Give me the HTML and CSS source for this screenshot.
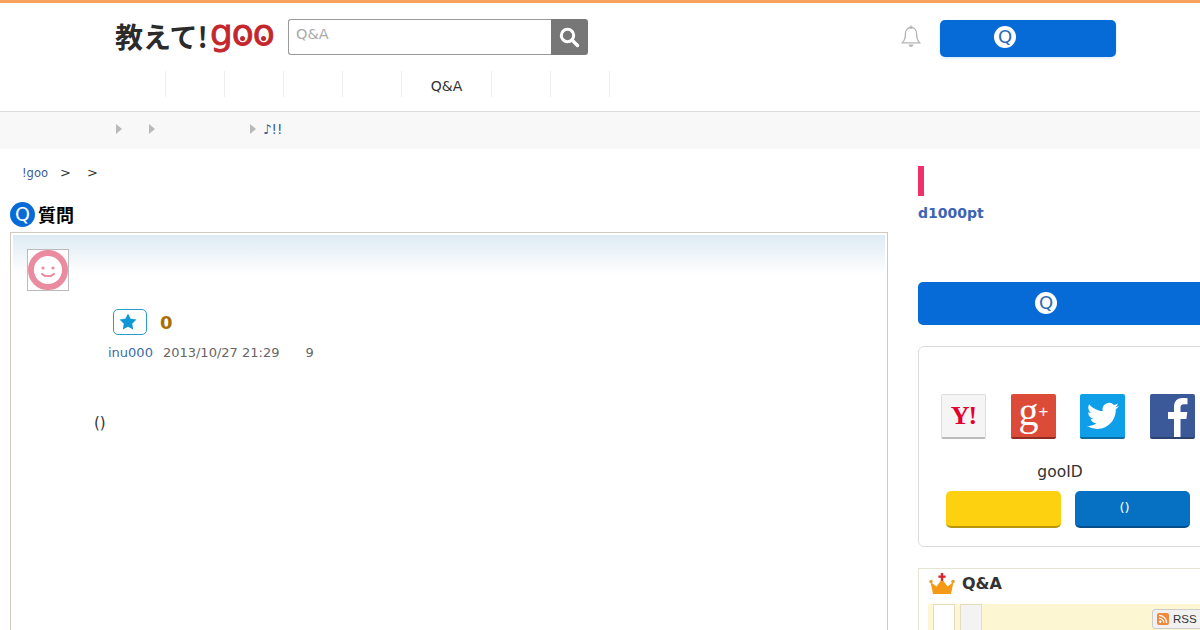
FILE: index.html
```html
<!DOCTYPE html>
<html lang="ja">
<head>
    <meta charset="UTF-8">
    <meta name="viewport" content="width=device-width, initial-scale=1.0">
    <title>教えて!goo</title>
    <link rel="stylesheet" href="styles.css">
</head>
<body>
    <header class="header">
        <div class="header-top">
            <a class="logo"><span class="logo-ja">教えて!</span><span class="logo-goo">g<span class="logo-o">o</span><span class="logo-o">o</span></span></a>
            <form class="search">
                <div class="search-input">Q&amp;A</div>
                <button class="search-btn" type="button">
                    <svg width="22" height="22" viewBox="0 0 22 22"><circle cx="9.500" cy="9.500" r="6.200" fill="none" stroke="#fff" stroke-width="3"/><path d="M14 14l5.500 5.500" stroke="#fff" stroke-width="3.400" stroke-linecap="round"/></svg>
                </button>
            </form>
            <svg class="bell" width="20" height="24" viewBox="0 0 20 24"><path d="M10 2.500c-3.600 0-5.600 2.800-5.600 6.300 0 4.600-.8 6.900-3 9h17.200c-2.200-2.100-3-4.400-3-9 0-3.500-2-6.300-5.600-6.300z" fill="none" stroke="#b5b5b5" stroke-width="1.300"/><circle cx="10" cy="2.200" r="1.200" fill="none" stroke="#b5b5b5"/><path d="M7.500 19.500c.4 1.700 1.400 2.500 2.500 2.500s2.100-.8 2.500-2.500z" fill="#b5b5b5"/></svg>
            <a class="ask-btn ask-btn-head"><span class="q-mark">Q</span></a>
        </div>
        <nav class="nav">
            <a class="nav-item"></a>
            <a class="nav-item"></a>
            <a class="nav-item"></a>
            <a class="nav-item"></a>
            <a class="nav-item"></a>
            <a class="nav-item nav-wide">Q&amp;A</a>
            <a class="nav-item"></a>
            <a class="nav-item"></a>
        </nav>
    </header>

    <div class="notice">
        <span class="arrow arrow-1"></span>
        <span class="arrow arrow-2"></span>
        <span class="arrow arrow-3"></span>
        <a class="notice-link">♪!!</a>
    </div>

    <div class="page">
        <main class="main">
            <div class="crumbs"><a>!goo</a><span>&gt;</span><span>&gt;</span></div>
            <h2 class="q-title"><span class="q-badge">Q</span>質問</h2>
            <section class="q-box">
                <div class="q-inner">
                    <div class="avatar">
                        <svg width="40" height="40" viewBox="0 0 40 40"><circle cx="20" cy="20" r="17" fill="#fff" stroke="#ea8ba0" stroke-width="6"/><circle cx="15" cy="18" r="1.600" fill="#ea8ba0"/><circle cx="25" cy="18" r="1.600" fill="#ea8ba0"/><path d="M14 24c3 3 9 3 12 0" fill="none" stroke="#ea8ba0" stroke-width="2" stroke-linecap="round"/></svg>
                    </div>
                    <div class="fav-row">
                        <button class="fav-btn" type="button">
                            <svg width="18" height="17" viewBox="0 0 18 17"><path d="M9 .5l2.600 5.300 5.900.8-4.300 4.100 1 5.800L9 13.800l-5.200 2.700 1-5.800L.5 6.600l5.900-.8z" fill="#0f97d6"/></svg>
                        </button>
                        <span class="fav-count">0</span>
                    </div>
                    <p class="meta"><a>inu000</a><span class="meta-date">2013/10/27 21:29</span><span class="meta-num">9</span></p>
                    <p class="q-body">()</p>
                </div>
            </section>
        </main>

        <aside class="side">
            <div class="pink-bar"></div>
            <a class="point">d1000pt</a>
            <a class="ask-btn ask-btn-side"><span class="q-mark">Q</span></a>

            <section class="login-box">
                <div class="sns">
                    <a class="sns-icon sns-y">Y!</a>
                    <a class="sns-icon sns-g">g<small>+</small></a>
                    <a class="sns-icon sns-t">
                        <svg width="32" height="32" viewBox="0 0 24 24"><path fill="#fff" d="M23.953 4.570a10 10 0 01-2.825.775 4.958 4.958 0 002.163-2.723c-.951.555-2.005.959-3.127 1.184a4.920 4.920 0 00-8.384 4.482C7.690 8.095 4.067 6.130 1.640 3.162a4.822 4.822 0 00-.666 2.475c0 1.710.870 3.213 2.188 4.096a4.904 4.904 0 01-2.228-.616v.060a4.923 4.923 0 003.946 4.827 4.996 4.996 0 01-2.212.085 4.936 4.936 0 004.604 3.417 9.867 9.867 0 01-6.102 2.105c-.390 0-.779-.023-1.170-.067a13.995 13.995 0 007.557 2.209c9.053 0 13.998-7.496 13.998-13.985 0-.210 0-.420-.015-.630A9.935 9.935 0 0024 4.590z"/></svg>
                    </a>
                    <a class="sns-icon sns-f">
                        <svg width="45" height="43" viewBox="0 0 45 43"><path fill="#fff" d="M24 43V25h-6v-7h6v-5c0-6 3.500-9 8.500-9 2.400 0 4.500.2 5 .3v6h-3.500c-2.800 0-3.500 1.300-3.500 3.300V18h6.800l-.9 7h-5.900v18z"/></svg>
                    </a>
                </div>
                <p class="login-text">gooID</p>
                <div class="login-btns">
                    <a class="login-btn login-yellow"></a>
                    <a class="login-btn login-blue">()</a>
                </div>
            </section>

            <section class="rank-box">
                <h3 class="rank-title">
                    <svg width="26" height="22" viewBox="0 0 26 22"><path d="M4 21L1.500 9l6 4.500L13 6l5.500 7.500 6-4.500L22 21z" fill="#f59a16"/><circle cx="2" cy="8.500" r="1.800" fill="#e2a13a"/><circle cx="24" cy="8.500" r="1.800" fill="#e2a13a"/><path d="M11.800 0h2.400v2.400h2.400v2.400h-2.400v3h-2.400v-3H9.400V2.400h2.400z" fill="#d8232a"/></svg>
                    Q&amp;A
                </h3>
                <div class="rank-band">
                    <span class="rank-tab"></span>
                    <span class="rank-tab rank-tab-off"></span>
                    <a class="rss">
                        <svg width="12" height="12" viewBox="0 0 12 12"><rect width="12" height="12" rx="2" fill="#ef8a3c"/><circle cx="3.200" cy="8.800" r="1.200" fill="#fff"/><path d="M2 5.200a4.800 4.800 0 014.800 4.800M2 2.400A7.600 7.600 0 019.600 10" fill="none" stroke="#fff" stroke-width="1.300"/></svg>
                        RSS
                    </a>
                </div>
            </section>
        </aside>
    </div>
</body>
</html>
```

FILE: styles.css
```css
html, body {
    height: 630px;
    overflow: hidden;
}

body {
    font-family: "DejaVu Sans", "Noto Sans CJK JP", sans-serif;
    margin: 0;
    padding: 0;
    background-color: #fff;
    color: #333;
}

p, h2, h3 {
    margin: 0;
}

/* header */
.header {
    height: 108px;
    border-top: 3px solid #f9a15e;
    border-bottom: 1px solid #ddd;
}

.header-top {
    display: flex;
    align-items: flex-start;
    height: 68px;
    padding-left: 115px;
}

.logo {
    display: flex;
    align-items: center;
    width: 173px;
    height: 34px;
    margin-top: 16px;
    white-space: nowrap;
}

.logo-ja {
    font-family: "Noto Sans CJK JP", sans-serif;
    font-size: 28px;
    font-weight: 700;
    color: #2b2b2b;
}

.logo-goo {
    font-family: "DejaVu Sans", sans-serif;
    font-size: 36px;
    letter-spacing: -1px;
    color: #c4262c;
    -webkit-text-stroke: 0.8px #c4262c;
    margin: -8px 0 0 2px;
}

.logo-o {
    position: relative;
}

.logo-o::after {
    content: "";
    position: absolute;
    left: 8px;
    top: 24px;
    width: 5px;
    height: 5px;
    border-radius: 50%;
    background-color: #c4262c;
}

.search {
    display: flex;
    width: 300px;
    height: 36px;
    margin-top: 16px;
}

.search-input {
    flex: 1;
    border: 1px solid #999;
    border-right: none;
    border-radius: 3px 0 0 3px;
    padding: 6px 7px;
    font-size: 14.500px;
    color: #aaa;
}

.search-btn {
    width: 37px;
    padding: 0 2px 0 0;
    border: none;
    border-radius: 0 3px 3px 0;
    background-color: #777;
    display: flex;
    align-items: center;
    justify-content: center;
}

.bell {
    margin: 22px 0 0 313px;
}

.ask-btn {
    display: flex;
    justify-content: center;
    background-color: #066bd6;
    border-radius: 5px;
}

.ask-btn-head {
    width: 176px;
    height: 37px;
    margin: 17px 0 0 19px;
    padding-top: 6px;
    padding-right: 46px;
    box-sizing: border-box;
    box-shadow: 0 1px 3px #cfe6fa;
}

.q-mark {
    display: block;
    width: 22px;
    height: 22px;
    border-radius: 50%;
    background-color: #fff;
    color: #2b6cb5;
    font-size: 18px;
    line-height: 21px;
    text-align: center;
}

.nav {
    display: flex;
    height: 26px;
    padding-left: 107px;
}

.nav-item {
    box-sizing: border-box;
    width: 59px;
    border-right: 1px solid #eee;
    font-size: 14px;
    line-height: 30px;
    text-align: center;
    color: #333;
}

.nav-wide {
    width: 90px;
}

/* notice bar */
.notice {
    display: flex;
    align-items: center;
    box-sizing: border-box;
    height: 37px;
    background-color: #f8f8f8;
    padding: 0 0 3px 116px;
    font-size: 13.500px;
}

.arrow {
    width: 0;
    height: 0;
    border-left: 6px solid #b9b9b9;
    border-top: 5px solid transparent;
    border-bottom: 5px solid transparent;
}

.arrow-2 {
    margin-left: 27px;
}

.arrow-3 {
    margin-left: 95px;
}

.notice-link {
    margin-left: 7px;
    color: #3a5d94;
}

/* main layout */
.page {
    display: grid;
    grid-template-columns: 878px 300px;
    column-gap: 30px;
    padding-left: 10px;
}

.crumbs {
    display: flex;
    gap: 12px;
    height: 54px;
    padding: 16px 0 0 12px;
    box-sizing: border-box;
    font-size: 11.500px;
    line-height: 16px;
}

.crumbs a {
    color: #3a5d94;
}

.crumbs span {
    font-size: 13px;
    color: #333;
    margin-right: 4px;
}

.q-title {
    display: flex;
    align-items: flex-start;
    gap: 3px;
    height: 29px;
    margin-top: -1px;
    padding-bottom: 1px;
    font-family: "Noto Sans CJK JP", sans-serif;
    font-size: 18px;
    line-height: 25px;
    color: #000;
}

.q-badge {
    width: 25px;
    height: 25px;
    border-radius: 50%;
    background-color: #066bd6;
    color: #fff;
    font-family: "DejaVu Sans", sans-serif;
    font-size: 19px;
    font-weight: 400;
    line-height: 24px;
    text-align: center;
}

.q-box {
    width: 878px;
    height: 420px;
    box-sizing: border-box;
    border: 1px solid #cfcac0;
    padding: 2px;
}

.q-inner {
    box-sizing: border-box;
    height: 40px;
    background: linear-gradient(#deebf3, #fff);
    padding: 14px 0 0 14px;
}

.avatar {
    box-sizing: border-box;
    width: 42px;
    height: 42px;
    border: 1px solid #bbb;
    background-color: #fff;
}

.avatar svg {
    display: block;
}

.fav-row {
    display: flex;
    align-items: center;
    gap: 13px;
    margin: 18px 0 0 86px;
}

.fav-btn {
    display: flex;
    align-items: center;
    justify-content: center;
    width: 34px;
    height: 26px;
    padding: 0 4px 2px 0;
    background-color: #fff;
    border: 1px solid #2b9cc4;
    border-radius: 5px;
}

.fav-count {
    font-size: 18px;
    font-weight: 700;
    color: #a66f00;
}

.meta {
    margin: 9px 0 0 81px;
    font-size: 13px;
    line-height: 17px;
    color: #666;
    white-space: nowrap;
}

.meta a {
    color: #3a6ca8;
}

.meta-date {
    margin-left: 10px;
}

.meta-num {
    margin-left: 26px;
}

.q-body {
    margin: 52px 0 0 67px;
    font-size: 15px;
    line-height: 20px;
}

/* sidebar */
.side {
    padding-top: 17px;
}

.pink-bar {
    width: 6px;
    height: 30px;
    background-color: #f0306a;
}

.point {
    display: block;
    margin-top: 8px;
    font-size: 14px;
    font-weight: 700;
    line-height: 18px;
    color: #3c63b5;
}

.ask-btn-side {
    height: 43px;
    margin-top: 60px;
    padding: 10px 0 0 117px;
    box-sizing: border-box;
    justify-content: flex-start;
}

.login-box {
    box-sizing: border-box;
    height: 201px;
    margin-top: 21px;
    border: 1px solid #ddd;
    border-radius: 6px;
    padding: 47px 0 0 22px;
}

.sns {
    display: flex;
    gap: 24px;
}

.sns-icon {
    display: flex;
    align-items: center;
    justify-content: center;
    box-sizing: border-box;
    width: 45px;
    height: 45px;
    border-radius: 2px;
}

.sns-y {
    background-color: #f5f5f5;
    border: 1px solid #ddd;
    border-bottom: 2px solid #bbb;
    color: #e4002b;
    font-family: "Liberation Serif", serif;
    font-size: 26px;
    font-weight: 700;
    letter-spacing: -1px;
}

.sns-g {
    margin-left: 1px;
    padding-bottom: 8px;
    background-color: #dc4b38;
    border-bottom: 2px solid #8e2d20;
    color: #fff;
    font-family: "Liberation Serif", serif;
    font-size: 40px;
    line-height: 38px;
}

.sns-g small {
    font-family: "Liberation Sans", sans-serif;
    font-size: 17px;
    font-weight: 400;
}

.sns-t {
    background-color: #0f9fe8;
    border-bottom: 2px solid #0b6ea3;
}

.sns-f {
    margin-left: 1px;
    background-color: #3b5898;
    border-bottom: 2px solid #2b4170;
    align-items: flex-start;
}

.login-text {
    width: 238px;
    margin-top: 22px;
    font-size: 15.500px;
    line-height: 22px;
    text-align: center;
    color: #333;
}

.login-btns {
    display: flex;
    gap: 14px;
    margin: 8px 0 0 5px;
}

.login-btn {
    box-sizing: border-box;
    width: 115px;
    height: 37px;
    border-radius: 5px;
    font-size: 13px;
    line-height: 34px;
    text-align: center;
}

.login-yellow {
    background-color: #fdd010;
    border-bottom: 2px solid #b8960c;
}

.login-blue {
    padding-right: 16px;
    background-color: #0670c2;
    border-bottom: 2px solid #05508c;
    color: #fff;
}

.rank-box {
    box-sizing: border-box;
    height: 100px;
    margin-top: 21px;
    border: 1px solid #e8e4d4;
    padding: 0 0 0 9px;
}

.rank-title {
    display: flex;
    align-items: center;
    gap: 7px;
    box-sizing: border-box;
    height: 35px;
    padding: 0 0 6px 1px;
    font-size: 16px;
    font-weight: 700;
    color: #333;
}

.rank-band {
    position: relative;
    display: flex;
    gap: 5px;
    height: 60px;
    background-color: #fdf6d3;
    padding-left: 5px;
}

.rank-tab {
    box-sizing: border-box;
    width: 22px;
    background-color: #fff;
    border: 1px solid #e3dcc0;
    border-bottom: none;
}

.rank-tab-off {
    background-color: #f3f3f3;
}

.rss {
    position: absolute;
    left: 224px;
    top: 5px;
    display: flex;
    align-items: center;
    gap: 4px;
    height: 18px;
    padding: 0 20px 0 4px;
    background-color: #f1f1f1;
    border: 1px solid #ccc;
    border-radius: 3px;
    font-family: "Liberation Sans", sans-serif;
    font-size: 11.500px;
    color: #333;
}
```
